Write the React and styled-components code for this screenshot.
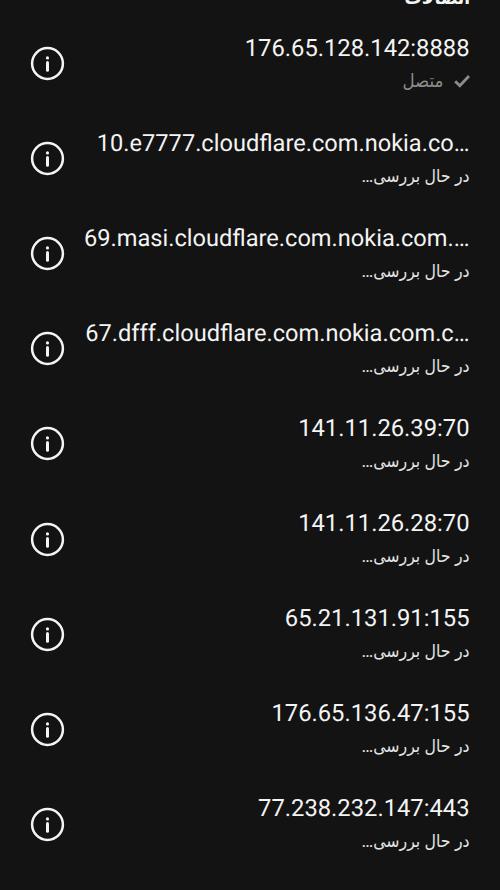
import React from "react";
import styled, { createGlobalStyle } from "styled-components";

const GlobalStyle = createGlobalStyle`
  body {
    margin: 0;
    background: #131313;
  }
`;
const Screen = styled.div`
  box-sizing: border-box;
  height: 890px;
  overflow: hidden;
  background: #131313;
  font-family: Roboto, "DejaVu Sans Condensed", "DejaVu Sans", sans-serif;
  color: #f4f4f4;
`;
const Heading = styled.h2`
  margin: -20px 30px 0 0;
  height: 36px;
  line-height: 35px;
  font-size: 19px;
  font-weight: 700;
  text-align: right;
`;
const Row = styled.div`
  display: flex;
  align-items: center;
  height: 95.1px;
  padding: 0 30.5px 0 30px;
`;
const InfoButton = styled.button`
  display: flex;
  flex: none;
  padding: 0;
  border: 0;
  background: none;
  color: inherit;
`;
const Texts = styled.div`
  flex: 1;
  display: flex;
  flex-direction: column;
  align-items: flex-end;
  padding-top: 4px;
`;
const Address = styled.div`
  font-size: ${(props) => (props.$host ? "23.6px" : "23.75px")};
  line-height: 30px;
  white-space: nowrap;
  text-rendering: geometricPrecision;
`;
const Status = styled.div`
  display: flex;
  align-items: center;
  gap: 10px;
  font-size: ${(props) => (props.$muted ? "18.5px" : "17.5px")};
  line-height: 36px;
  color: ${(props) => (props.$muted ? "#8c8c8c" : "#e4e4e4")};
`;

const proxies = [
  { address: "176.65.128.142:8888", connected: true },
  { address: "10.e7777.cloudflare.com.nokia.co…", host: true },
  { address: "69.masi.cloudflare.com.nokia.com.…", host: true },
  { address: "67.dfff.cloudflare.com.nokia.com.c…", host: true },
  { address: "141.11.26.39:70" },
  { address: "141.11.26.28:70" },
  { address: "65.21.131.91:155" },
  { address: "176.65.136.47:155" },
  { address: "77.238.232.147:443" },
];

const InfoIcon = () => (
  <svg width="35" height="35" viewBox="0 0 35 35" fill="none">
    <circle cx="17.5" cy="17.5" r="15.4" stroke="currentColor" strokeWidth="2.5" />
    <circle cx="17.5" cy="11.9" r="1.6" fill="currentColor" />
    <path d="M17.5 16.6v7.6" stroke="currentColor" strokeWidth="3" strokeLinecap="round" />
  </svg>
);
const CheckIcon = () => (
  <svg width="16" height="14" viewBox="0 0 16 14" fill="none">
    <path d="M1.2 7.2l4.6 4.6L15 2" stroke="currentColor" strokeWidth="2.8" />
  </svg>
);

const App = () => {
  return (
    <Screen>
      <GlobalStyle />
      <Heading dir="rtl">اتصالات</Heading>
      {proxies.map((proxy) => (
        <Row key={proxy.address}>
          <InfoButton>
            <InfoIcon />
          </InfoButton>
          <Texts>
            <Address $host={proxy.host}>{proxy.address}</Address>
            <Status dir="rtl" $muted={proxy.connected}>
              {proxy.connected && <CheckIcon />}
              <span>{proxy.connected ? "متصل" : "در حال بررسی…"}</span>
            </Status>
          </Texts>
        </Row>
      ))}
    </Screen>
  );
};
export default App;
